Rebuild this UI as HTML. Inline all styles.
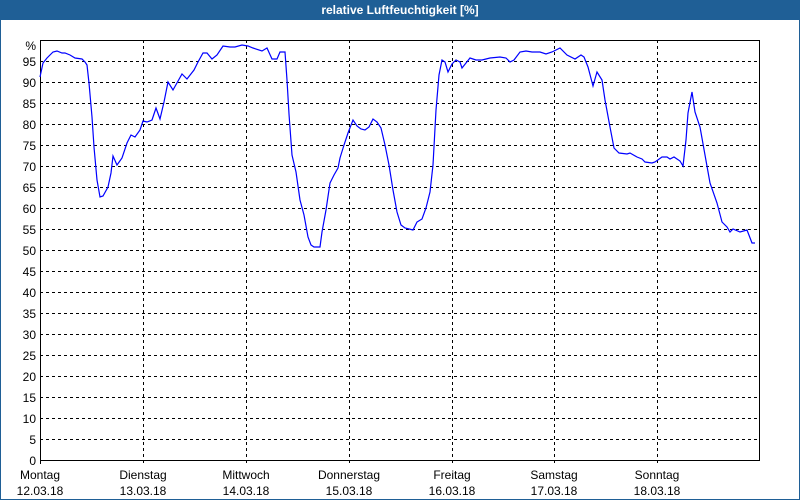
<!DOCTYPE html>
<html><head><meta charset="utf-8"><style>
html,body{margin:0;padding:0;}
body{width:800px;height:500px;overflow:hidden;background:#fff;font-family:"Liberation Sans",sans-serif;}
.frame{position:absolute;left:0;top:0;width:798px;height:498px;border:1px solid #1f5f96;}
.title{position:absolute;left:0;top:0;width:800px;height:20px;background:#1f5f96;color:#fff;font-weight:bold;font-size:12px;line-height:20px;text-align:center;}
svg{position:absolute;left:0;top:0;}
</style></head><body>
<div class="frame"></div>
<div class="title">relative Luftfeuchtigkeit [%]</div>
<svg width="800" height="500" viewBox="0 0 800 500" font-family="Liberation Sans, sans-serif" font-size="12">
<g stroke="#000" stroke-width="1" stroke-dasharray="3,3" fill="none">
<path d="M40 439.5H760M40 418.5H760M40 397.5H760M40 376.5H760M40 355.5H760M40 334.5H760M40 313.5H760M40 292.5H760M40 271.5H760M40 250.5H760M40 229.5H760M40 208.5H760M40 187.5H760M40 166.5H760M40 145.5H760M40 124.5H760M40 103.5H760M40 82.5H760M40 61.5H760"/>
<path d="M143.5 40V464M246.5 40V464M349.5 40V464M452.5 40V464M554.5 40V464M657.5 40V464"/>
</g>
<rect x="40.5" y="40.5" width="719" height="420" fill="none" stroke="#000"/>
<path d="M40.5 460V464" stroke="#000"/>
<g text-anchor="end" fill="#000">
<text x="36" y="50">%</text>
<text x="36" y="66">95</text><text x="36" y="87">90</text><text x="36" y="108">85</text><text x="36" y="129">80</text>
<text x="36" y="150">75</text><text x="36" y="171">70</text><text x="36" y="192">65</text><text x="36" y="213">60</text>
<text x="36" y="234">55</text><text x="36" y="255">50</text><text x="36" y="276">45</text><text x="36" y="297">40</text>
<text x="36" y="318">35</text><text x="36" y="339">30</text><text x="36" y="360">25</text><text x="36" y="381">20</text>
<text x="36" y="402">15</text><text x="36" y="423">10</text><text x="36" y="444">5</text><text x="36" y="465">0</text>
</g>
<g text-anchor="middle" fill="#000">
<text x="40" y="479">Montag</text><text x="40" y="495">12.03.18</text>
<text x="143" y="479">Dienstag</text><text x="143" y="495">13.03.18</text>
<text x="246" y="479">Mittwoch</text><text x="246" y="495">14.03.18</text>
<text x="349" y="479">Donnerstag</text><text x="349" y="495">15.03.18</text>
<text x="452" y="479">Freitag</text><text x="452" y="495">16.03.18</text>
<text x="554" y="479">Samstag</text><text x="554" y="495">17.03.18</text>
<text x="657" y="479">Sonntag</text><text x="657" y="495">18.03.18</text>
</g>
<polyline fill="none" stroke="#0000ff" stroke-width="1.2" points="40,77 43,63 47,58 53,52 57,51 62,53 65,53 70,55 75,58 82,59 85,62 87,65 89,83 92,117 94,147 97,180 100,197 103,196 108,187 111,173 113,156 117,165 122,158 127,143 131,135 135,137 140,130 143,121 147,122 152,120 156,108 160,119 164,102 168,82 173,90 182,74 187,79 194,70 198,62 203,53 207,53 212,59 217,55 223,46 230,47 235,47 242,45 248,46 253,48 262,51 267,48 272,59 277,59 280,52 285,52 287,80 289,114 292,155 296,172 300,200 304,215 308,237 311,245 314,247 320,247 322,232 326,210 330,183 334,175 338,168 340,158 344,145 348,133 353,120 357,126 361,129 365,130 369,127 373,119 377,122 381,128 385,145 389,165 393,190 397,212 401,225 405,228 413,230 417,222 422,219 426,208 430,192 433,165 436,110 439,75 442,60 445,62 448,72 452,64 456,60 460,62 462,68 466,63 470,58 476,60 482,60 490,58 500,57 506,58 510,62 514,60 520,52 526,51 532,52 540,52 546,54 552,52 556,50 560,48 567,55 575,59 581,55 584,57 588,67 593,86 597,72 602,80 605,100 610,127 614,148 619,153 627,154 630,153 637,157 642,159 645,162 652,163 655,162 662,157 667,157 670,159 674,157 680,161 683,166 686,140 688,113 692,92 695,112 700,127 705,155 710,183 717,203 722,222 727,227 730,232 733,229 740,232 747,230 752,243 755,243"/>
</svg>
</body></html>
